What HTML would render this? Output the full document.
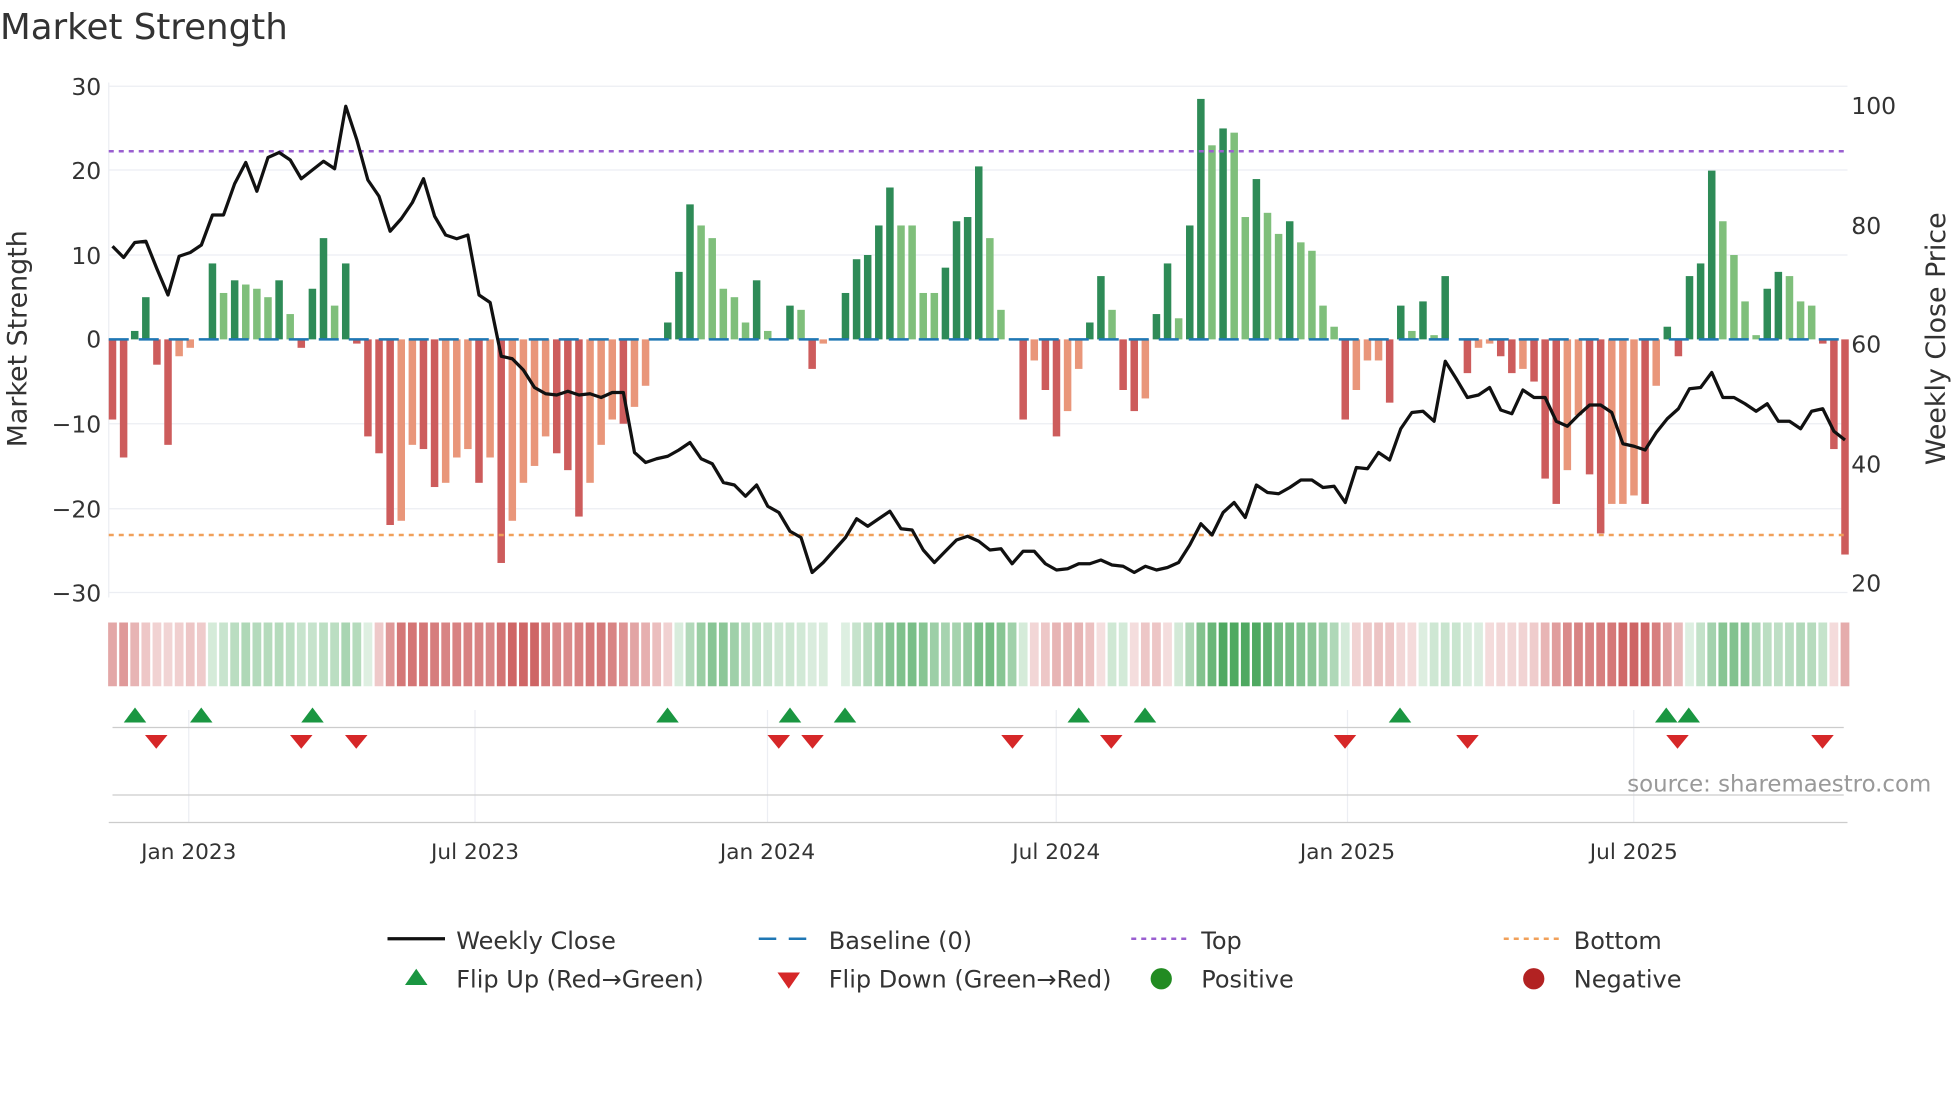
<!DOCTYPE html>
<html><head><meta charset="utf-8"><style>
html,body{margin:0;padding:0;background:#fff;width:1960px;height:1102px;overflow:hidden}
svg{display:block}
text{font-family:"DejaVu Sans","Liberation Sans",sans-serif;fill:#333}
</style></head><body>
<svg id="s" width="1960" height="1102" viewBox="0 0 1568 881.6" xmlns="http://www.w3.org/2000/svg">
<text x="0" y="31" font-size="28.5">Market Strength</text>
<g stroke="#eceef3" stroke-width="1">
<line x1="87" x2="1478" y1="69" y2="69"/><line x1="87" x2="1478" y1="136" y2="136"/><line x1="87" x2="1478" y1="204" y2="204"/><line x1="87" x2="1478" y1="339" y2="339"/><line x1="87" x2="1478" y1="407" y2="407"/><line x1="87" x2="1478" y1="474" y2="474"/>
<line x1="87" x2="87" y1="66" y2="478"/>
</g>
<g font-size="18.8" text-anchor="end">
<text x="81" y="76">30</text><text x="81" y="143">20</text><text x="81" y="211">10</text><text x="81" y="278">0</text><text x="81" y="346">−10</text><text x="81" y="414">−20</text><text x="81" y="481">−30</text>
</g>
<g font-size="18.8">
<text x="1481" y="91">100</text><text x="1481" y="187">80</text><text x="1481" y="282">60</text><text x="1481" y="378">40</text><text x="1481" y="473">20</text>
</g>
<text font-size="21.5" transform="translate(21,271) rotate(-90)" text-anchor="middle">Market Strength</text>
<text font-size="21.5" transform="translate(1556,271) rotate(-90)" text-anchor="middle">Weekly Close Price</text>
<g id="bars"></g>
<line x1="87" x2="1478" y1="271.5" y2="271.5" stroke="#1f77b4" stroke-width="2" stroke-dasharray="16,8"/>
<line x1="87" x2="1478" y1="121" y2="121" stroke="#9a5fd0" stroke-width="2" stroke-dasharray="4,4"/>
<line x1="87" x2="1478" y1="428" y2="428" stroke="#f0a05a" stroke-width="2" stroke-dasharray="4,4"/>
<polyline id="price" fill="none" stroke="#111" stroke-width="2.6" stroke-linejoin="round"/>
<g id="strip"></g>
<g stroke="#eceef3"><line x1="151" x2="151" y1="568" y2="658"/><line x1="380" x2="380" y1="568" y2="658"/><line x1="614" x2="614" y1="568" y2="658"/><line x1="845" x2="845" y1="568" y2="658"/><line x1="1078" x2="1078" y1="568" y2="658"/><line x1="1307" x2="1307" y1="568" y2="658"/></g>
<line x1="90" x2="1475" y1="582" y2="582" stroke="#ccc"/>
<line x1="90" x2="1475" y1="636" y2="636" stroke="#ccc"/>
<line x1="87" x2="1478" y1="658" y2="658" stroke="#ccc"/>
<g id="flips"></g>
<text x="1545" y="633" font-size="18.3" text-anchor="end" style="fill:#999">source: sharemaestro.com</text>
<g font-size="17.3" text-anchor="middle">
<text x="151" y="687">Jan 2023</text><text x="380" y="687">Jul 2023</text><text x="614" y="687">Jan 2024</text><text x="845" y="687">Jul 2024</text><text x="1078" y="687">Jan 2025</text><text x="1307" y="687">Jul 2025</text>
</g>
<g font-size="19.2">
<line x1="310" x2="356" y1="751" y2="751" stroke="#111" stroke-width="2.6"/><text x="365" y="759">Weekly Close</text>
<line x1="607" x2="651" y1="751" y2="751" stroke="#1f77b4" stroke-width="2" stroke-dasharray="14,10"/><text x="663" y="759">Baseline (0)</text>
<line x1="905" x2="949" y1="751" y2="751" stroke="#9a5fd0" stroke-width="2" stroke-dasharray="4,4"/><text x="961" y="759">Top</text>
<line x1="1203" x2="1247" y1="751" y2="751" stroke="#f0a05a" stroke-width="2" stroke-dasharray="4,4"/><text x="1259" y="759">Bottom</text>
<polygon points="324,788 342,788 333,775" fill="#1a9641"/><text x="365" y="790">Flip Up (Red→Green)</text>
<polygon points="622,778 640,778 631,791" fill="#d62728"/><text x="663" y="790">Flip Down (Green→Red)</text>
<circle cx="929" cy="783" r="8.5" fill="#228b22"/><text x="961" y="790">Positive</text>
<circle cx="1227" cy="783" r="8.5" fill="#b22222"/><text x="1259" y="790">Negative</text>
</g>
</svg>
<script>
var V=[-9.5,-14,1,5,-3,-12.5,-2,-1,0,9,5.5,7,6.5,6,5,7,3,-1,6,12,4,9,-0.5,-11.5,-13.5,-22,-21.5,-12.5,-13,-17.5,-17,-14,-13,-17,-14,-26.5,-21.5,-17,-15,-11.5,-13.5,-15.5,-21,-17,-12.5,-9.5,-10,-8,-5.5,0,2,8,16,13.5,12,6,5,2,7,1,0,4,3.5,-3.5,-0.5,0,5.5,9.5,10,13.5,18,13.5,13.5,5.5,5.5,8.5,14,14.5,20.5,12,3.5,0,-9.5,-2.5,-6,-11.5,-8.5,-3.5,2,7.5,3.5,-6,-8.5,-7,3,9,2.5,13.5,28.5,23,25,24.5,14.5,19,15,12.5,14,11.5,10.5,4,1.5,-9.5,-6,-2.5,-2.5,-7.5,4,1,4.5,0.5,7.5,0,-4,-1,-0.5,-2,-4,-3.5,-5,-16.5,-19.5,-15.5,-9,-16,-23,-19.5,-19.5,-18.5,-19.5,-5.5,1.5,-2,7.5,9,20,14,10,4.5,0.5,6,8,7.5,4.5,4,-0.5,-13,-25.5];
var P=[197,206,194,193,215,236,205,202,196,172,172,147,130,153,126,122,128,143,136,129,135,85,112,144,157,185,175,162,143,173,188,191,188,236,242,285,287,296,310,315,316,313,316,315,318,314,314,362,370,367,365,360,354,367,371,386,388,397,388,405,410,425,430,458,450,440,430,415,421,415,409,423,424,440,450,441,432,429,433,440,439,451,441,441,451,456,455,451,451,448,452,453,458,453,456,454,450,436,419,428,410,402,414,388,394,395,390,384,384,390,389,402,374,375,362,368,343,330,329,337,289,303,318,316,310,328,331,312,318,318,337,341,332,324,324,330,355,357,360,346,335,327,311,310,298,318,318,323,329,323,337,337,343,329,327,345,352];
var ns="http://www.w3.org/2000/svg";
function el(p,t,a){var e=document.createElementNS(ns,t);for(var k in a)e.setAttribute(k,a[k]);p.appendChild(e);return e;}
var n=V.length,step=(1476-90)/(n-1);
var bars=document.getElementById('bars'),strip=document.getElementById('strip');
for(var i=0;i<n;i++){
 var x=90+i*step,v=V[i],pv=i?V[i-1]:0,c;
 if(v>=0)c=(v>pv)?'#2e8b57':'#7fbf7b';else c=(v<pv)?'#cd5c5c':'#e9967a';
 var y0=271.5,y1=271.5-v*6.75;
 if(Math.abs(v)>0.05)el(bars,'rect',{x:x-3,y:Math.min(y0,y1),width:6,height:Math.abs(y1-y0),fill:c});
 var s=0,m=0;for(var j=Math.max(0,i-3);j<=i;j++){s+=V[j];m++;}s/=m;
 if(i==65)continue;
 var a=Math.min(0.9,0.16+Math.abs(s)/18*0.65);
 var col=s>=0?'rgba(60,160,80,'+a+')':'rgba(200,80,80,'+a+')';
 el(strip,'rect',{x:x-3.5,y:498,width:7,height:51,fill:col});
}
var pts=[];for(var i=0;i<P.length;i++)pts.push((90+i*step).toFixed(1)+','+P[i]);
document.getElementById('price').setAttribute('points',pts.join(' '));
var f=document.getElementById('flips');
[108,161,250,534,632,676,863,916,1120,1333,1351].forEach(function(x){el(f,'polygon',{points:(x-9)+',578 '+(x+9)+',578 '+x+',566',fill:'#1a9641'});});
[125,241,285,623,650,810,889,1076,1174,1342,1458].forEach(function(x){el(f,'polygon',{points:(x-9)+',588 '+(x+9)+',588 '+x+',599',fill:'#d62728'});});
</script>
</body></html>
